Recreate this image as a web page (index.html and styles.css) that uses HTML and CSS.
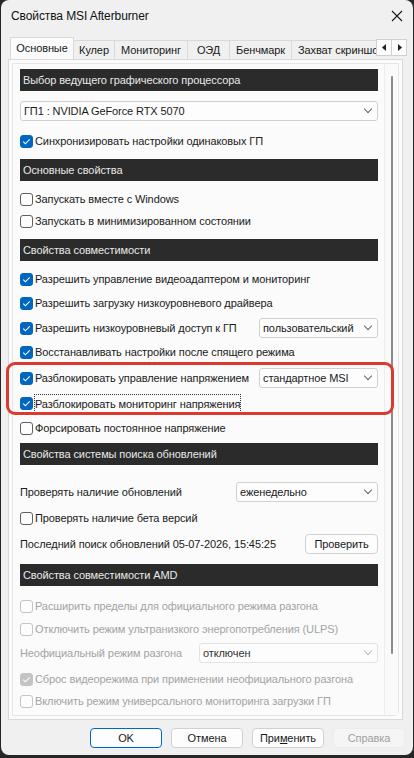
FILE: index.html
```html
<!DOCTYPE html>
<html lang="ru">
<head>
    <meta charset="UTF-8">
    <meta name="viewport" content="width=device-width, initial-scale=1.0">
    <title>Свойства MSI Afterburner</title>
    <link rel="stylesheet" href="styles.css">
</head>
<body>
    <div class="window">
        <div class="titlebar">
            <span class="title">Свойства MSI Afterburner</span>
            <svg class="close" width="12" height="12" viewBox="0 0 12 12">
                <path d="M1 1 L11 11 M11 1 L1 11" stroke="#1b1b1b" stroke-width="1.1" fill="none"/>
            </svg>
        </div>

        <div class="tabbar">
            <div class="tabs">
                <div class="tab active">Основные</div>
                <div class="tab t-cool">Кулер</div>
                <div class="tab t-mon">Мониторинг</div>
                <div class="tab t-osd">ОЭД</div>
                <div class="tab t-bench">Бенчмарк</div>
                <div class="tab t-shot">Захват скриншотов</div>
            </div>
            <div class="tab-arrows">
                <span class="arrow"><svg width="5" height="7" viewBox="0 0 5 7"><path d="M4 0 L0 3.5 L4 7 Z" fill="#222"/></svg></span>
                <span class="arrow"><svg width="5" height="7" viewBox="0 0 5 7"><path d="M1 0 L5 3.5 L1 7 Z" fill="#222"/></svg></span>
            </div>
        </div>

        <div class="panel">
            <div class="scroll">
                <div class="content">
                    <div class="section">Выбор ведущего графического процессора</div>
                    <div class="select wide mt-10"><span>ГП1 : NVIDIA GeForce RTX 5070</span><i class="chev"></i></div>
                    <label class="row mt-10"><span class="box checked"></span>Синхронизировать настройки одинаковых ГП</label>

                    <div class="section mt-8">Основные свойства</div>
                    <label class="row mt-8"><span class="box"></span>Запускать вместе с Windows</label>
                    <label class="row mt-2"><span class="box"></span>Запускать в минимизированном состоянии</label>

                    <div class="section mt-8">Свойства совместимости</div>
                    <label class="row mt-8"><span class="box checked"></span>Разрешить управление видеоадаптером и мониторинг</label>
                    <label class="row mt-4"><span class="box checked"></span>Разрешить загрузку низкоуровневого драйвера</label>
                    <div class="row mt-5">
                        <span class="box checked"></span>Разрешить низкоуровневый доступ к ГП
                        <div class="select side"><span>пользовательский</span><i class="chev"></i></div>
                    </div>
                    <label class="row mt-4"><span class="box checked"></span>Восстанавливать настройки после спящего режима</label>
                    <div class="row mt-6">
                        <span class="box checked"></span>Разблокировать управление напряжением
                        <div class="select side"><span>стандартное MSI</span><i class="chev"></i></div>
                    </div>
                    <label class="row mt-5"><span class="box checked"></span><span class="focus">Разблокировать мониторинг напряжения</span></label>
                    <label class="row mt-5"><span class="box"></span>Форсировать постоянное напряжение</label>

                    <div class="section mt-5">Свойства системы поиска обновлений</div>
                    <div class="row mt-17">
                        Проверять наличие обновлений
                        <div class="select freq"><span>еженедельно</span><i class="chev"></i></div>
                    </div>
                    <label class="row mt-6"><span class="box"></span>Проверять наличие бета версий</label>
                    <div class="row mt-6">
                        Последний поиск обновлений 05-07-2026, 15:45:25
                        <button class="btn check">Проверить</button>
                    </div>

                    <div class="section mt-10">Свойства совместимости AMD</div>
                    <label class="row disabled mt-10"><span class="box"></span>Расширить пределы для официального режима разгона</label>
                    <label class="row disabled mt-3"><span class="box"></span>Отключить режим ультранизкого энергопотребления (ULPS)</label>
                    <div class="row disabled mt-4">
                        Неофициальный режим разгона
                        <div class="select oc"><span>отключен</span><i class="chev"></i></div>
                    </div>
                    <label class="row disabled mt-6"><span class="box checked"></span>Сброс видеорежима при применении неофициального разгона</label>
                    <label class="row disabled mt-2"><span class="box"></span>Включить режим универсального мониторинга загрузки ГП</label>
                </div>
                <div class="scrollbar"><div class="thumb"></div></div>
            </div>
        </div>

        <div class="buttons">
            <button class="btn default">OK</button>
            <button class="btn">Отмена</button>
            <button class="btn">При<u>м</u>енить</button>
            <button class="btn off">Справка</button>
        </div>

        <!-- annotation drawn over the voltage options -->
        <div class="highlight"></div>
    </div>
</body>
</html>
```

FILE: styles.css
```css
body {
    margin: 0;
    background-color: #262626;
    font-family: 'Liberation Sans', Arial, sans-serif;
    font-size: 11px;
    letter-spacing: -0.1px;
    color: #1a1a1a;
}
.window {
    position: relative;
    width: 412px;
    height: 755px;
    margin-left: 1px;
    background-color: #f0f0f0;
    border-radius: 8px;
    overflow: hidden;
}
.titlebar {
    height: 32px;
    display: flex;
    align-items: center;
    justify-content: space-between;
    padding: 0 9px 0 10px;
}
.title {
    font-size: 12px;
    color: #111;
}
.close {
    margin-right: 1px;
}
.tabbar {
    display: flex;
    align-items: flex-end;
    height: 27px;
    padding-left: 9px;
}
.tabs {
    display: flex;
    align-items: flex-end;
    width: 366px;
    overflow: hidden;
    height: 23px;
}
.tab {
    height: 18px;
    line-height: 18px;
    border: 1px solid #d9d9d9;
    border-bottom: none;
    border-left: none;
    background-color: #f0f0f0;
    white-space: nowrap;
    text-align: center;
    flex-shrink: 0;
}
.tab.active {
    width: 62px;
    height: 22px;
    line-height: 21px;
    border-left: 1px solid #d9d9d9;
    background-color: #fbfbfb;
    position: relative;
    top: 1px;
}
.t-cool { width: 40px; }
.t-mon { width: 72px; }
.t-osd { width: 41px; }
.t-bench { width: 61px; }
.t-shot { width: 110px; text-align: left; padding-left: 6px; }
.tab-arrows {
    display: flex;
    margin-bottom: 3px;
}
.arrow {
    width: 14px;
    height: 15px;
    border: 1px solid #d0d0d0;
    background-color: #fdfdfd;
    display: flex;
    align-items: center;
    justify-content: center;
}
.arrow + .arrow {
    border-left: none;
}
.panel {
    margin-left: 7px;
    width: 395px;
    height: 661px;
    border: 1px solid #d9d9d9;
    background-color: #fbfbfb;
    padding: 3px;
    box-sizing: border-box;
}
.scroll {
    display: flex;
    height: 100%;
    border: 1px solid #e6e6e6;
    border-radius: 0 0 4px 0;
    box-sizing: border-box;
}
.content {
    flex: 1;
    padding: 5px 0 0 7px;
    overflow: hidden;
}
.scrollbar {
    width: 13px;
    border-left: 1px solid #ededed;
    background-color: #fafafa;
    padding-top: 12px;
    display: flex;
    justify-content: center;
}
.thumb {
    width: 2px;
    height: 578px;
    border-radius: 1px;
    background-color: #8a8a8a;
}
.section {
    width: 355px;
    height: 22px;
    line-height: 22px;
    padding-left: 3px;
    background-color: #2b2b2b;
    color: #e9e9e9;
}
.row {
    display: flex;
    align-items: center;
    height: 20px;
    width: 358px;
    white-space: nowrap;
}
.row.disabled {
    color: #a3a3a3;
}
.box {
    width: 11px;
    height: 11px;
    border: 1px solid #5f5f5f;
    border-radius: 3px;
    background-color: #fdfdfd;
    margin-right: 2px;
    flex-shrink: 0;
}
.box.checked {
    border-color: #0067c0;
    background-color: #0067c0;
    background-image: url("data:image/svg+xml;utf8,<svg xmlns='http://www.w3.org/2000/svg' width='11' height='11' viewBox='0 0 11 11'><path d='M2.3 5.7 L4.4 7.8 L8.7 3.4' stroke='white' stroke-width='1.1' fill='none'/></svg>");
}
.disabled .box {
    border-color: #c4c4c4;
}
.disabled .box.checked {
    background-color: #c4c4c4;
}
.focus {
    display: inline-block;
    height: 17px;
    line-height: 18px;
    outline: 1px dotted #333;
    outline-offset: 0;
}
.select {
    display: flex;
    align-items: center;
    justify-content: space-between;
    height: 18px;
    border: 1px solid #d0d0d0;
    border-radius: 3px;
    background-color: #fdfdfd;
    padding: 0 6px 0 3px;
    color: #1a1a1a;
    box-sizing: content-box;
}
.select.wide {
    width: 347px;
}
.select.side {
    margin-left: auto;
    width: 108px;
}
.select.freq {
    margin-left: auto;
    width: 131px;
}
.select.oc {
    margin-left: auto;
    width: 168px;
}
.disabled .select {
    border-color: #e3e3e3;
    color: #333;
}
.disabled .chev {
    border-color: #bbb;
}
.chev {
    width: 5px;
    height: 5px;
    border-right: 1px solid #666;
    border-bottom: 1px solid #666;
    transform: rotate(45deg);
    margin-top: -4px;
}
.btn {
    font-family: inherit;
    font-size: 11px;
    letter-spacing: -0.1px;
    width: 72px;
    height: 20px;
    padding: 0;
    border: 1px solid #d0d0d0;
    border-radius: 4px;
    background-color: #fdfdfd;
    color: #1a1a1a;
}
.btn.check {
    margin-left: auto;
    width: 73px;
}
.btn.default {
    border-color: #0067c0;
}
.btn.off {
    color: #a0a0a0;
    border-color: #ececec;
    background-color: #f5f5f5;
}
.buttons {
    display: flex;
    justify-content: flex-end;
    gap: 9px;
    padding: 8px 8px 0 0;
}
.highlight {
    position: absolute;
    left: 5px;
    top: 362px;
    width: 382px;
    height: 47px;
    border: 3px solid #dc3a30;
    border-radius: 9px;
}
.mt-2 { margin-top: 2px; }
.mt-3 { margin-top: 3px; }
.mt-4 { margin-top: 4px; }
.mt-5 { margin-top: 5px; }
.mt-6 { margin-top: 6px; }
.mt-8 { margin-top: 8px; }
.mt-10 { margin-top: 10px; }
.mt-17 { margin-top: 17px; }
```
